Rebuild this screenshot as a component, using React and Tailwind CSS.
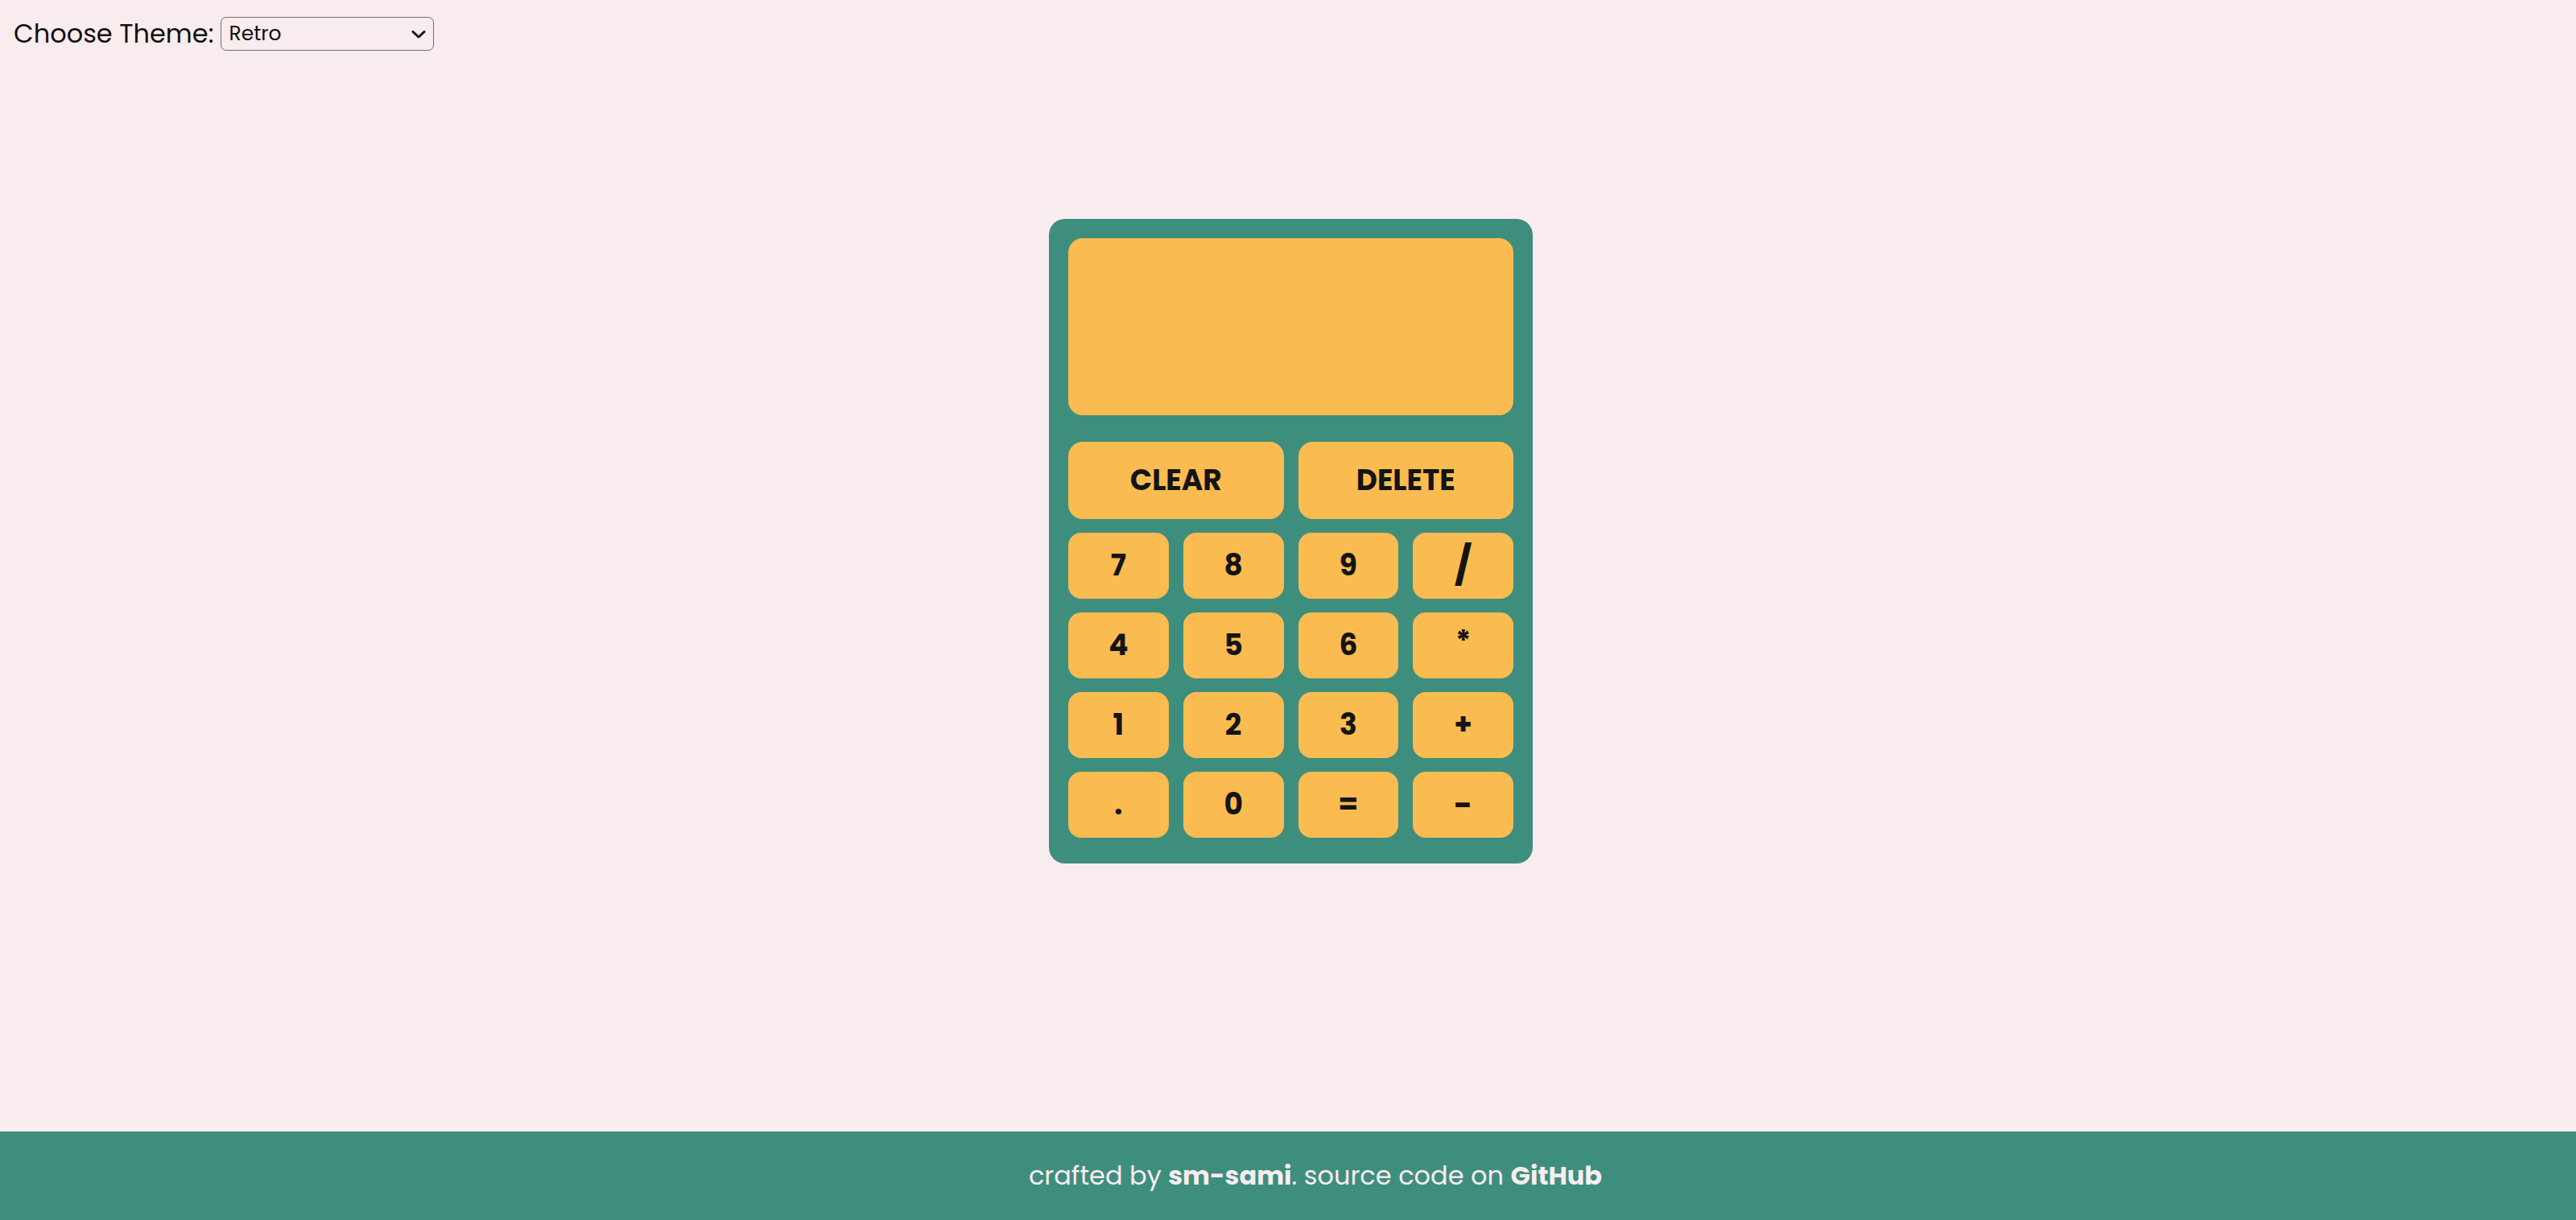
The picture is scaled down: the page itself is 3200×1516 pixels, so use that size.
import React from "react";

const FONT = { fontFamily: '"Poppins", "Noto Sans", "Open Sans", sans-serif' };

function Key({ children, className = "" }) {
  return (
    <button
      className={`flex items-center justify-center rounded-[16px] bg-[#fabb51] text-[36px] font-bold leading-none text-[#141414] ${className}`}
      style={FONT}
    >
      {children}
    </button>
  );
}

export default function App() {
  const keys = ["7", "8", "9", "/", "4", "5", "6", "*", "1", "2", "3", "+", ".", "0", "=", "-"];
  return (
    <div className="flex h-screen flex-col bg-[#f9ecee]" style={FONT}>
      <header className="flex h-[84px] items-center pl-[17px]">
        <label className="text-[32px] leading-none text-[#111]" style={FONT}>
          Choose Theme:
        </label>
        <div className="relative ml-[9px] h-[42px] w-[265px]">
          <select
            className="h-full w-full appearance-none rounded-[7px] border-[1.5px] border-[#6e6e6e] bg-[#f9ecee] pl-[9px] text-[25px] text-[#111] outline-none"
            style={FONT}
            defaultValue="retro"
          >
            <option value="retro">Retro</option>
            <option value="dark">Dark</option>
            <option value="light">Light</option>
          </select>
          <svg
            className="pointer-events-none absolute right-[10px] top-[17px]"
            width="18"
            height="10"
            viewBox="0 0 18 10"
            fill="none"
          >
            <path d="M2 1.5 L9 8 L16 1.5" stroke="#111" strokeWidth="3" strokeLinecap="round" strokeLinejoin="round" />
          </svg>
        </div>
      </header>
      <main className="flex flex-1 justify-center pl-[7px]">
        <div className="mt-[188px] h-[801px] w-[601px] rounded-[20px] bg-[#3e8e7e] px-[24px] pt-[24px]">
          <div className="h-[220px] rounded-[18px] bg-[#fabb51]" />
          <div className="mt-[33px] grid grid-cols-4 gap-x-[18px] gap-y-[17px]">
            <Key className="col-span-2 h-[96px] rounded-[18px]">CLEAR</Key>
            <Key className="col-span-2 h-[96px] rounded-[18px]">DELETE</Key>
            {keys.map((k) => (
              <Key key={k} className="h-[82px]">
                {k === "/" ? (
                  <span className="text-[48px]">/</span>
                ) : k === "*" ? (
                  <span className="-mt-[10px]">*</span>
                ) : k === "-" ? (
                  <span className="text-[40px]">-</span>
                ) : (
                  k
                )}
              </Key>
            ))}
          </div>
        </div>
      </main>
      <footer className="flex h-[110px] items-center justify-center bg-[#3e8e7e] pl-[68px] text-[32px] font-normal text-[#f9ecee]">
        <span>
          crafted by <b className="font-bold">sm-sami</b>. source code on <b className="font-bold">GitHub</b>
        </span>
      </footer>
    </div>
  );
}
